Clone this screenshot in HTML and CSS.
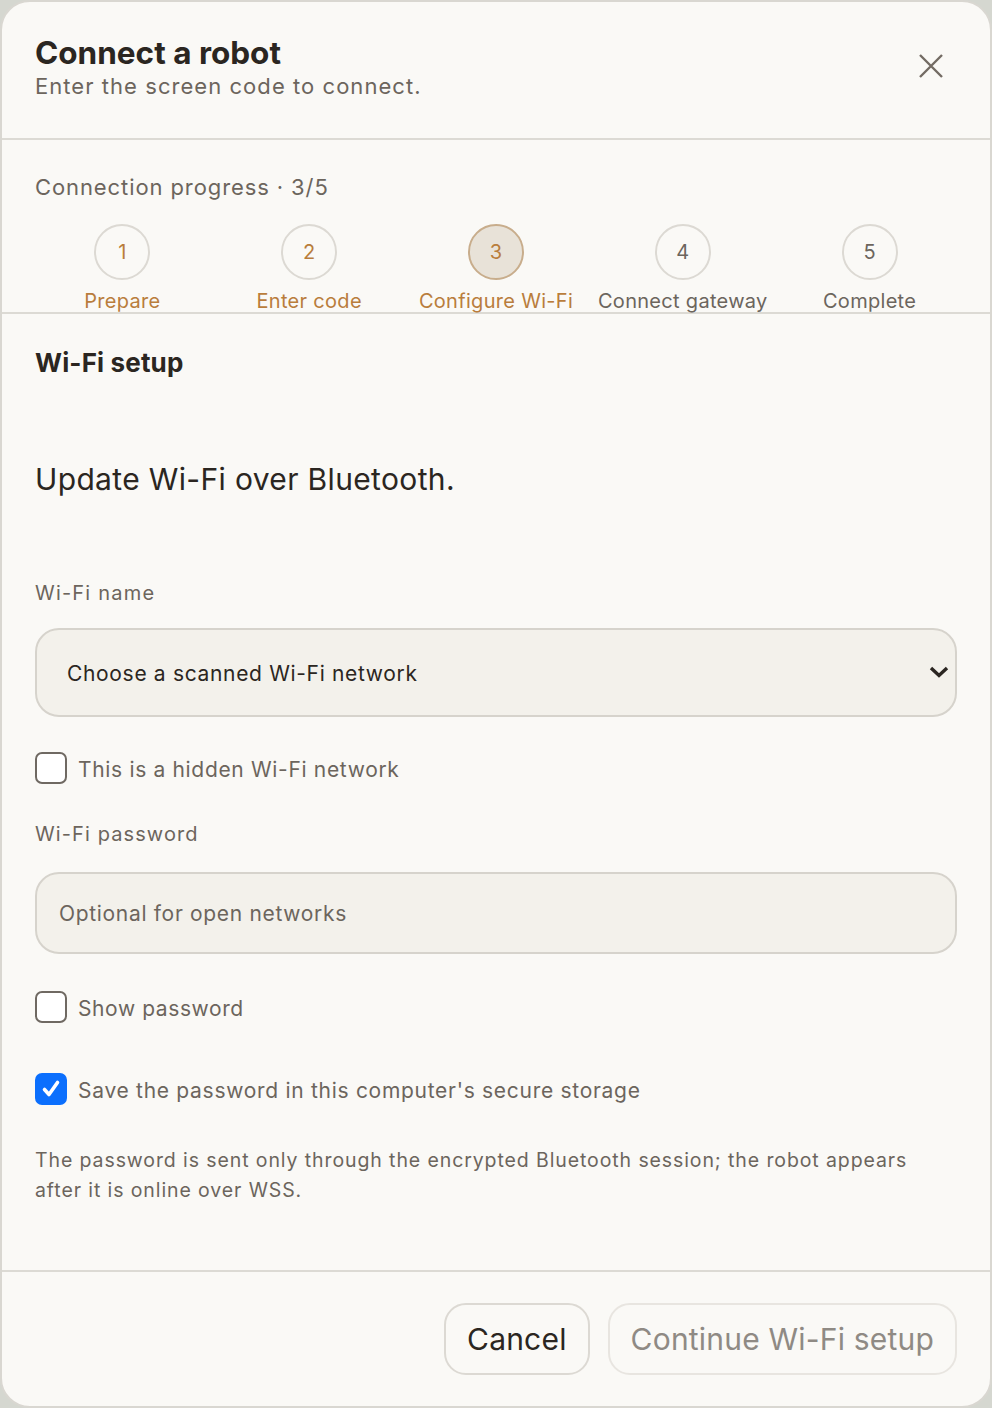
FILE: index.html
```html
<!DOCTYPE html>
<html lang="en">
<head>
<meta charset="utf-8">
<title>Connect a robot</title>
<link rel="stylesheet" href="styles.css">
</head>
<body>
<div class="dialog">
  <header class="dialog-header">
    <div class="titles">
      <h1 class="title">Connect a robot</h1>
      <p class="subtitle">Enter the screen code to connect.</p>
    </div>
    <button class="close" aria-label="Close">
      <svg width="24" height="24" viewBox="0 0 24 24"><path d="M1 1L23 23M23 1L1 23" stroke="#736b63" stroke-width="2.4" fill="none"/></svg>
    </button>
  </header>

  <section class="progress">
    <div class="progress-title">Connection progress · 3/5</div>
    <ol class="steps">
      <li class="step done"><span class="dot">1</span><span class="label">Prepare</span></li>
      <li class="step done"><span class="dot">2</span><span class="label">Enter code</span></li>
      <li class="step current"><span class="dot">3</span><span class="label">Configure Wi-Fi</span></li>
      <li class="step"><span class="dot">4</span><span class="label">Connect gateway</span></li>
      <li class="step"><span class="dot">5</span><span class="label">Complete</span></li>
    </ol>
  </section>

  <main class="content">
    <h2 class="section-title">Wi-Fi setup</h2>
    <p class="lead">Update Wi-Fi over Bluetooth.</p>

    <div class="field-label">Wi-Fi name</div>
    <div class="select">
      <span>Choose a scanned Wi-Fi network</span>
      <svg width="20" height="14" viewBox="0 0 20 14"><path d="M2 3L10 10.5L18 3" stroke="#2b2621" stroke-width="3.4" fill="none"/></svg>
    </div>

    <label class="check check-hidden"><span class="box"></span><span class="check-text">This is a hidden Wi-Fi network</span></label>

    <div class="field-label pw-label">Wi-Fi password</div>
    <div class="input"><span class="placeholder">Optional for open networks</span></div>

    <label class="check check-show"><span class="box"></span><span class="check-text">Show password</span></label>

    <label class="check check-save"><span class="box checked"><svg width="22" height="22" viewBox="0 0 22 22"><path d="M4.5 11.5L9 16.5L17.5 4.5" stroke="#fff" stroke-width="3.6" fill="none" stroke-linecap="round" stroke-linejoin="round"/></svg></span><span class="check-text">Save the password in this computer's secure storage</span></label>

    <p class="note">The password is sent only through the encrypted Bluetooth session; the robot appears after it is online over WSS.</p>
  </main>

  <footer class="dialog-footer">
    <button class="btn">Cancel</button>
    <button class="btn disabled">Continue Wi-Fi setup</button>
  </footer>
</div>
</body>
</html>
```
FILE: styles.css
```css
* { box-sizing: border-box; }
html, body { margin: 0; padding: 0; }
body {
  background: #d5d7d0;
  font-family: Inter, "Noto Sans", sans-serif;
  color: #2b2621;
}
.dialog {
  width: 992px;
  height: 1408px;
  background: #faf9f6;
  border: 2px solid #d9d7d1;
  border-radius: 30px;
  display: flex;
  flex-direction: column;
  overflow: hidden;
}
.dialog-header {
  display: flex;
  justify-content: space-between;
  align-items: flex-start;
  padding: 33px 47px 0 33px;
  height: 138px;
  border-bottom: 2px solid #dcdad4;
  flex: none;
}
.title {
  margin: 0;
  font-size: 31.5px;
  line-height: 36px;
  font-weight: 700;
  color: #2b2621;
}
.subtitle {
  margin: 1px 0 0;
  font-size: 22px;
  line-height: 28px;
  color: #6c655d;
  letter-spacing: 1.05px;
}
.close {
  border: 0;
  background: none;
  padding: 0;
  margin-top: 19px;
  width: 24px;
  height: 24px;
  display: block;
}
.close svg { display: block; }

.progress {
  flex: none;
  padding: 32px 33px 0;
  border-bottom: 2px solid #dcdad4;
}
.progress-title {
  font-size: 22px;
  line-height: 30px;
  color: #6c655d;
  letter-spacing: 0.9px;
}
.steps {
  list-style: none;
  margin: 22px 0 0;
  padding: 0;
  display: grid;
  grid-template-columns: repeat(5, 1fr);
  column-gap: 12px;
}
.step {
  display: flex;
  flex-direction: column;
  align-items: center;
  gap: 10px;
  color: #6c655d;
}
.dot {
  width: 56px;
  height: 56px;
  border-radius: 50%;
  border: 2px solid #dcd9d3;
  display: flex;
  align-items: center;
  justify-content: center;
  font-size: 20px;
}
.label {
  font-size: 20px;
  line-height: 22px;
  white-space: nowrap;
  letter-spacing: 0.3px;
}
.step.done, .step.current { color: #b97d3c; }
.step.current .dot {
  background: #e8e2d8;
  border-color: #c8ad8c;
}

.content {
  flex: 1;
  padding: 33px 33px 0;
  display: flex;
  flex-direction: column;
  align-items: flex-start;
}
.section-title {
  margin: 0;
  font-size: 26px;
  line-height: 32px;
  font-weight: 700;
  letter-spacing: 0.15px;
}
.lead {
  margin: 81px 0 0;
  font-size: 30px;
  line-height: 38px;
  font-weight: 400;
  letter-spacing: 0.35px;
}
.field-label {
  margin-top: 82px;
  font-size: 20px;
  line-height: 26px;
  color: #6c655d;
  letter-spacing: 1.2px;
}
.pw-label { margin-top: 37px; letter-spacing: 1.1px; }
.select {
  margin-top: 22px;
  align-self: stretch;
  height: 89px;
  background: #f3f1eb;
  border: 2px solid #d6d3cc;
  border-radius: 24px;
  display: flex;
  align-items: center;
  justify-content: space-between;
  padding: 2px 6px 0 30px;
  font-size: 21px;
  letter-spacing: 0.67px;
  color: #2b2621;
}
.select svg { display: block; margin-top: -4px; }
.input {
  margin-top: 25px;
  align-self: stretch;
  height: 82px;
  background: #f3f1eb;
  border: 2px solid #d6d3cc;
  border-radius: 24px;
  display: flex;
  align-items: center;
  padding: 0 22px;
  font-size: 21px;
  letter-spacing: 0.68px;
}
.placeholder { color: #6c655d; }
.check {
  display: flex;
  align-items: center;
  gap: 11px;
  height: 32px;
  font-size: 21px;
  line-height: 32px;
  color: #6c655d;
  letter-spacing: 0.67px;
}
.check-text { padding-top: 4px; }
.check-hidden { margin-top: 35px; }
.check-show { margin-top: 37px; letter-spacing: 0.6px; }
.check-save { margin-top: 50px; letter-spacing: 0.71px; }
.box {
  width: 32px;
  height: 32px;
  border: 2px solid #6f6962;
  border-radius: 7px;
  background: #fff;
  flex: none;
  display: flex;
  align-items: center;
  justify-content: center;
}
.box.checked {
  background: #0b6ffd;
  border-color: #0b6ffd;
}
.box svg { display: block; }
.note {
  margin: 40px 0 0;
  max-width: 900px;
  font-size: 19.5px;
  line-height: 30px;
  color: #6c655d;
  letter-spacing: 0.9px;
}

.dialog-footer {
  flex: none;
  border-top: 2px solid #dcdad4;
  display: flex;
  justify-content: flex-end;
  gap: 18px;
  padding: 31px 33px 31px;
}
.btn {
  height: 72px;
  padding: 0 21px;
  background: #faf9f6;
  border: 2px solid #dcd9d3;
  border-radius: 22px;
  font-family: Inter, "Noto Sans", sans-serif;
  font-size: 30px;
  letter-spacing: 0.2px;
  color: #2b2621;
}
.btn.disabled {
  color: #8f8a84;
  border-color: #e8e5e0;
}
```
